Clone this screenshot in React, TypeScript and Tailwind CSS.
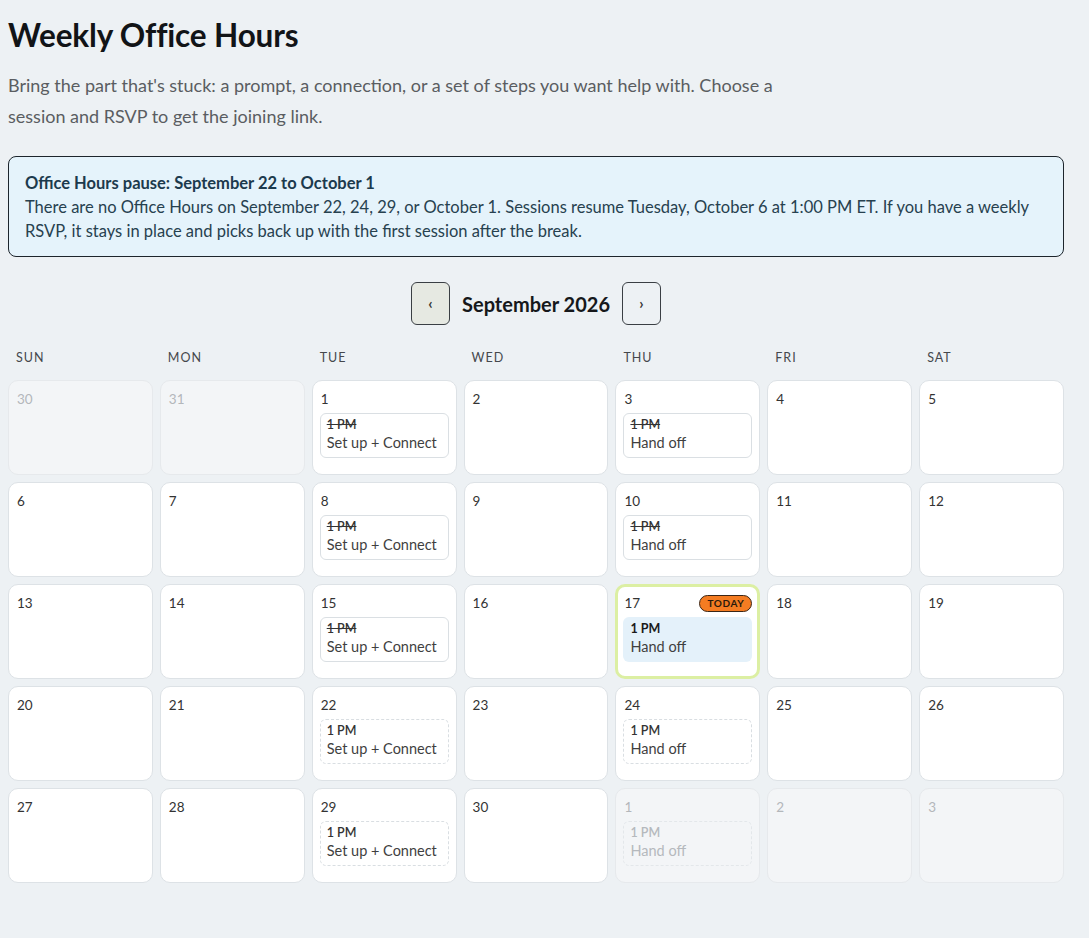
import React from "react";

type Session = {
  time: string;
  title: string;
  state: "past" | "today" | "paused" | "pausedOut";
};

type Day = {
  n: number;
  out?: boolean;
  today?: boolean;
  session?: Session;
};

const SETUP = "Set up + Connect";
const HANDOFF = "Hand off";

const weeks: Day[][] = [
  [
    { n: 30, out: true },
    { n: 31, out: true },
    { n: 1, session: { time: "1 PM", title: SETUP, state: "past" } },
    { n: 2 },
    { n: 3, session: { time: "1 PM", title: HANDOFF, state: "past" } },
    { n: 4 },
    { n: 5 },
  ],
  [
    { n: 6 },
    { n: 7 },
    { n: 8, session: { time: "1 PM", title: SETUP, state: "past" } },
    { n: 9 },
    { n: 10, session: { time: "1 PM", title: HANDOFF, state: "past" } },
    { n: 11 },
    { n: 12 },
  ],
  [
    { n: 13 },
    { n: 14 },
    { n: 15, session: { time: "1 PM", title: SETUP, state: "past" } },
    { n: 16 },
    { n: 17, today: true, session: { time: "1 PM", title: HANDOFF, state: "today" } },
    { n: 18 },
    { n: 19 },
  ],
  [
    { n: 20 },
    { n: 21 },
    { n: 22, session: { time: "1 PM", title: SETUP, state: "paused" } },
    { n: 23 },
    { n: 24, session: { time: "1 PM", title: HANDOFF, state: "paused" } },
    { n: 25 },
    { n: 26 },
  ],
  [
    { n: 27 },
    { n: 28 },
    { n: 29, session: { time: "1 PM", title: SETUP, state: "paused" } },
    { n: 30 },
    { n: 1, out: true, session: { time: "1 PM", title: HANDOFF, state: "pausedOut" } },
    { n: 2, out: true },
    { n: 3, out: true },
  ],
];

const weekdays = ["SUN", "MON", "TUE", "WED", "THU", "FRI", "SAT"];

function SessionChip({ s }: { s: Session }) {
  // ── box style depends on where the session sits relative to the pause
  const box =
    s.state === "today"
      ? "border border-transparent bg-[#e4f1fa]"
      : s.state === "past"
        ? "border border-[#dadfe3] bg-white"
        : s.state === "paused"
          ? "border border-dashed border-[#d9dee2] bg-white"
          : "border border-dashed border-[#e3e7ea] bg-transparent";

  const timeCls =
    s.state === "past"
      ? "line-through text-[#333] font-semibold"
      : s.state === "today"
        ? "text-[#1a1a1a] font-bold"
        : s.state === "paused"
          ? "text-[#333] font-semibold"
          : "text-[#b5b9bd] font-semibold";

  const titleCls = s.state === "pausedOut" ? "text-[#b5b9bd]" : "text-[#3f3f3f]";

  return (
    <div className={`rounded-[6px] pl-[6px] pr-1 pt-[3px] pb-[4px] ${box}`}>
      <div className={`text-[12.5px] leading-[16px] ${timeCls}`}>{s.time}</div>
      <div className={`text-[14.5px] leading-[20px] whitespace-nowrap ${titleCls}`}>{s.title}</div>
    </div>
  );
}

function DayCell({ d }: { d: Day }) {
  const shell = d.today
    ? "border-[3px] border-[#dcefa3] bg-white px-[5px] pt-[6px]"
    : d.out
      ? "border border-[#e6e9ec] bg-[#f3f5f7] px-[7px] pt-[8px]"
      : "border border-[#dde2e6] bg-white px-[7px] pt-[8px]";

  return (
    <div className={`h-[95px] rounded-[10px] ${shell}`}>
      <div className="flex items-center justify-between h-[20px] pl-[1px]">
        <span className={`text-[13.5px] ${d.out ? "text-[#b3b7bb]" : "text-[#333]"}`}>{d.n}</span>
        {d.today && (
          <span className="rounded-full border border-[#3b2616] bg-[#f47c22] px-[7px] h-[17px] leading-[15px] text-[10px] font-bold tracking-[0.06em] text-[#2a1a0c]">
            TODAY
          </span>
        )}
      </div>
      {d.session && (
        <div className="mt-[4px]">
          <SessionChip s={d.session} />
        </div>
      )}
    </div>
  );
}

export default function App() {
  return (
    <div
      className="min-h-screen bg-[#edf1f4] px-2 pt-[16px] pb-10"
      style={{ fontFamily: "Lato, 'Noto Sans', Arial, sans-serif" }}
    >
      <div className="w-[1056px]">
        <h1 className="text-[31.5px] leading-[38px] font-bold tracking-[-0.005em] text-[#121417]">
          Weekly Office Hours
        </h1>
        <p className="mt-[16px] max-w-[790px] text-[18px] leading-[31px] text-[#5a5d61]">
          Bring the part that's stuck: a prompt, a connection, or a set of steps you want help with. Choose a
          session and RSVP to get the joining link.
        </p>

        {/* pause notice */}
        <div className="mt-[24px] rounded-[8px] border border-[#1d252c] bg-[#e5f3fb] px-4 pt-[14px] pb-[13px] text-[16.5px] leading-[24px]">
          <div className="font-bold text-[#1c3a4d]">Office Hours pause: September 22 to October 1</div>
          <p className="text-[#27414f]">
            There are no Office Hours on September 22, 24, 29, or October 1. Sessions resume Tuesday, October 6 at
            1:00 PM ET. If you have a weekly RSVP, it stays in place and picks back up with the first session after
            the break.
          </p>
        </div>

        {/* month nav */}
        <div className="mt-[25px] flex items-center justify-center gap-3">
          <button
            type="button"
            className="h-[43px] w-[39px] rounded-[6px] border border-[#3a3f44] bg-[#e6e9e2] text-[15px] font-bold text-[#333] flex items-center justify-center"
          >
            ‹
          </button>
          <div className="text-[20px] font-bold text-[#16181b]">September 2026</div>
          <button
            type="button"
            className="h-[43px] w-[39px] rounded-[6px] border border-[#3a3f44] bg-transparent text-[15px] font-bold text-[#333] flex items-center justify-center"
          >
            ›
          </button>
        </div>

        {/* weekday header */}
        <div className="mt-[24px] grid grid-cols-7 gap-[7px]">
          {weekdays.map((w) => (
            <div key={w} className="pl-2 text-[12.5px] leading-[18px] tracking-[0.08em] text-[#45484c]">
              {w}
            </div>
          ))}
        </div>

        {/* month grid */}
        <div className="mt-[13px] grid grid-cols-7 gap-[7px]">
          {weeks.flat().map((d, i) => (
            <DayCell key={i} d={d} />
          ))}
        </div>
      </div>
    </div>
  );
}
